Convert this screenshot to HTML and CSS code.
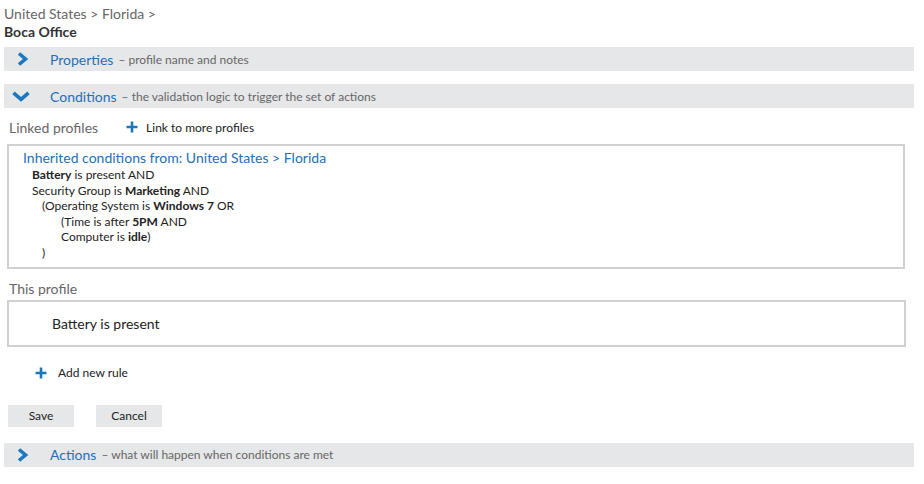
FILE: index.html
```html
<!DOCTYPE html>
<html>
<head>
<meta charset="utf-8">
<link rel="stylesheet" href="styles.css">
</head>
<body>
<div class="page">
  <div class="crumbs">United States &gt; Florida &gt;</div>
  <div class="title">Boca Office</div>

  <div class="bar bar-first">
    <svg class="chev-right" width="12" height="14" viewBox="0 0 12 14"><path d="M2 1.5 L8.5 7 L2 12.5" fill="none" stroke="#1b78bd" stroke-width="3.6"/></svg>
    <span class="bar-title">Properties</span><span class="bar-desc">– profile name and notes</span>
  </div>

  <div class="bar bar-second">
    <svg class="chev-down" width="18" height="11" viewBox="0 0 18 11"><path d="M1.5 1.8 L9 8.4 L16.5 1.8" fill="none" stroke="#1b78bd" stroke-width="3.6"/></svg>
    <span class="bar-title">Conditions</span><span class="bar-desc">– the validation logic to trigger the set of actions</span>
  </div>

  <div class="linked">
    <span class="label">Linked profiles</span>
    <span class="addlink">
      <svg class="plus" width="12" height="12" viewBox="0 0 12 12"><path d="M6 0.5 V11.5 M0.5 6 H11.5" stroke="#1b78bd" stroke-width="2.6"/></svg>
      Link to more profiles
    </span>
  </div>

  <div class="box inherited">
    <div class="inh-title">Inherited conditions from: United States &gt; Florida</div>
    <div class="rule i1"><b>Battery</b> is present AND</div>
    <div class="rule i1">Security Group is <b>Marketing</b> AND</div>
    <div class="rule i2">(Operating System is <b>Windows 7</b> OR</div>
    <div class="rule i3">(Time is after <b>5PM</b> AND</div>
    <div class="rule i3">Computer is <b>idle</b>)</div>
    <div class="rule i2">)</div>
  </div>

  <div class="label this-label">This profile</div>
  <div class="box this-box">Battery is present</div>

  <div class="addrule">
    <svg class="plus" width="12" height="12" viewBox="0 0 12 12"><path d="M6 0.5 V11.5 M0.5 6 H11.5" stroke="#1b78bd" stroke-width="2.6"/></svg>
    Add new rule
  </div>

  <div class="buttons">
    <button class="btn">Save</button>
    <button class="btn">Cancel</button>
  </div>

  <div class="bar bar-actions">
    <svg class="chev-right" width="12" height="14" viewBox="0 0 12 14"><path d="M2 1.5 L8.5 7 L2 12.5" fill="none" stroke="#1b78bd" stroke-width="3.6"/></svg>
    <span class="bar-title">Actions</span><span class="bar-desc">– what will happen when conditions are met</span>
  </div>
</div>
</body>
</html>
```

FILE: styles.css
```css
* { box-sizing: border-box; }
html, body { margin: 0; padding: 0; background: #fff; }
body {
  font-family: "Lato", "Open Sans", "Liberation Sans", sans-serif;
  color: #222;
}
.page {
  padding: 5px 10px 0 4px;
}
.crumbs {
  font-size: 14px;
  line-height: 18px;
  color: #666;
}
.title {
  font-size: 14px;
  line-height: 18px;
  font-weight: bold;
  color: #333;
}
.bar {
  height: 24px;
  background: #e6e7e8;
  display: flex;
  align-items: center;
  padding-left: 13px;
}
.bar-first { margin-top: 6px; }
.bar-second { margin-top: 13px; padding-left: 8px; }
.bar-actions { margin-top: 16px; }
.chev-right { flex: none; margin-right: 21px; }
.chev-down { flex: none; margin-right: 20px; }
.bar-title {
  font-size: 14px;
  color: #2470b8;
  margin-right: 5px;
}
.bar-desc {
  font-size: 12px;
  color: #666;
}
.linked {
  display: flex;
  align-items: center;
  height: 22px;
  margin-top: 8px;
  padding-left: 5px;
}
.label {
  font-size: 14px;
  color: #666;
}
.addlink {
  display: flex;
  align-items: center;
  margin-left: 28px;
  font-size: 12px;
  color: #222;
}
.addlink .plus { margin-right: 8px; }
.box {
  border: 2px solid #d0d0d0;
  margin-left: 3px;
}
.inherited {
  margin-top: 6px;
  margin-right: 9px;
  padding: 3px 0 6px 14px;
}
.inh-title {
  font-size: 14px;
  line-height: 18px;
  color: #2470b8;
}
.rule {
  font-size: 12px;
  line-height: 15.6px;
  color: #222;
}
.i1 { padding-left: 9px; }
.i2 { padding-left: 19px; }
.i3 { padding-left: 38px; }
.this-label {
  display: block;
  margin-top: 11px;
  padding-left: 5px;
  line-height: 18px;
}
.this-box {
  margin-top: 2px;
  margin-right: 8px;
  height: 47px;
  display: flex;
  align-items: center;
  padding-left: 43px;
  font-size: 14px;
  color: #222;
}
.addrule {
  display: flex;
  align-items: center;
  margin-top: 18px;
  padding-left: 31px;
  font-size: 12px;
  height: 16px;
  color: #222;
}
.addrule .plus { margin-right: 11px; }
.buttons {
  display: flex;
  gap: 22px;
  margin-top: 24px;
  padding-left: 4px;
}
.btn {
  font-family: inherit;
  font-size: 12px;
  color: #222;
  background: #e6e7e8;
  border: none;
  height: 22px;
  width: 66px;
  padding: 0;
}
```
